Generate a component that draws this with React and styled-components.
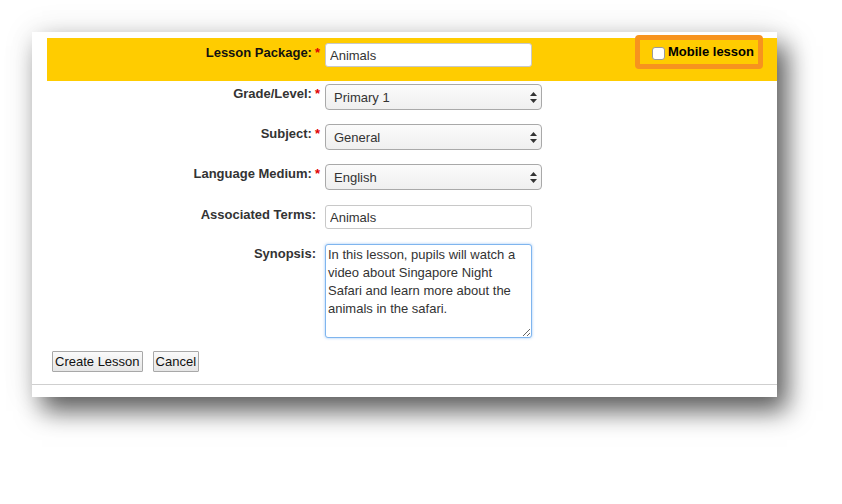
import React from "react";
import styled, { createGlobalStyle } from "styled-components";

const Global = createGlobalStyle`
  html, body { margin: 0; padding: 0; background: #ffffff; }
  body { font-family: "Liberation Sans", Arial, Helvetica, sans-serif; }
`;

const Page = styled.div`
  width: 842px;
  height: 504px;
  padding: 32px 0 0 32px;
  box-sizing: border-box;
  overflow: hidden;
`;

const Panel = styled.div`
  position: relative;
  width: 745px;
  height: 365px;
  box-sizing: border-box;
  background: #ffffff;
  padding: 6px 0 0 15px;
  display: flex;
  flex-direction: column;
  box-shadow: 10px 14px 24px rgba(0, 0, 0, 0.62), 0 0 30px rgba(0, 0, 0, 0.1);
`;

const Highlight = styled.div`
  display: grid;
  grid-template-columns: 269px 1fr;
  column-gap: 9px;
  align-items: start;
  background: #ffcc00;
  height: 43px;
  box-sizing: border-box;
  padding-top: 5px;
`;

const Fields = styled.div`
  display: grid;
  grid-template-columns: 269px 1fr;
  column-gap: 9px;
  row-gap: 14px;
  align-items: start;
  padding-top: 3px;
`;

const Label = styled.label`
  text-align: right;
  font-size: 13px;
  line-height: 16px;
  font-weight: bold;
  color: ${(p) => (p.$dark ? "#111" : "#333")};
  padding-top: 2px;
  margin-top: ${(p) => p.$mt || 0}px;
  white-space: nowrap;
`;

const Req = styled.span`
  color: #e00000;
  margin-left: 3px;
  margin-right: -4px;
`;

const TextInput = styled.input`
  display: block;
  width: 207px;
  height: 24px;
  box-sizing: border-box;
  margin-top: ${(p) => p.$mt || 0}px;
  border: 1px solid #c8c8c8;
  border-radius: 3px;
  background: #fff;
  padding: 0 4px;
  font-family: inherit;
  font-size: 13px;
  color: #333;
  outline: none;
`;

const SelectWrap = styled.div`
  position: relative;
  width: 217px;
  height: 26px;
`;

const Select = styled.select`
  appearance: none;
  -webkit-appearance: none;
  display: block;
  width: 217px;
  height: 26px;
  box-sizing: border-box;
  border: 1px solid #a9a9a9;
  border-radius: 4px;
  background: linear-gradient(#fbfbfb, #efefef);
  padding: 0 20px 0 8px;
  font-family: inherit;
  font-size: 13px;
  color: #333;
  outline: none;
`;

const Arrows = styled.svg`
  position: absolute;
  right: 5px;
  top: 8px;
  pointer-events: none;
`;

const Synopsis = styled.textarea`
  display: block;
  width: 207px;
  height: 94px;
  box-sizing: border-box;
  margin-top: 1px;
  border: 1px solid #7fb5ee;
  border-radius: 3px;
  box-shadow: 0 0 3px rgba(90, 160, 240, 0.6);
  padding: 1px 2px;
  font-family: inherit;
  font-size: 13px;
  line-height: 18px;
  color: #333;
  overflow: hidden;
  resize: both;
  outline: none;
`;

const Buttons = styled.div`
  display: flex;
  gap: 10px;
  padding: 13px 0 0 5px;
`;

const Button = styled.button`
  height: 21px;
  padding: 0 2px;
  border: 1px solid #a8a8a8;
  border-radius: 1px;
  background: linear-gradient(#fafafa, #e6e6e6);
  font-family: inherit;
  font-size: 13px;
  color: #111;
`;

const Rule = styled.hr`
  margin: 12px 0 0 -15px;
  border: 0;
  border-top: 1px solid #cfcfcf;
  height: 0;
`;

const MobileBox = styled.div`
  position: absolute;
  left: 603px;
  top: 3px;
  width: 128px;
  height: 34px;
  box-sizing: border-box;
  border: 5px solid #f7931e;
  border-radius: 4px;
  background: #ffcc00;
  display: flex;
  align-items: center;
  padding-left: 12px;
  gap: 3px;
`;

const Check = styled.span`
  width: 11px;
  height: 11px;
  margin-top: 3px;
  background: #fff;
  border: 1px solid #9a9a9a;
  border-radius: 3px;
`;

const MobileText = styled.span`
  font-size: 13px;
  font-weight: bold;
  color: #000;
  line-height: 16px;
  margin-top: -1px;
`;

const ArrowIcon = () => (
  <Arrows width="7" height="11" viewBox="0 0 7 11">
    <path d="M3.5 0 L7 4 L0 4 Z" fill="#333" />
    <path d="M3.5 11 L7 7 L0 7 Z" fill="#333" />
  </Arrows>
);

const DropDown = ({ value }) => (
  <SelectWrap>
    <Select defaultValue={value}>
      <option>{value}</option>
    </Select>
    <ArrowIcon />
  </SelectWrap>
);

const synopsis =
  "In this lesson, pupils will watch a\nvideo about Singapore Night\nSafari and learn more about the\nanimals in the safari.";

export default function App() {
  return (
    <Page>
      <Global />
      <Panel>
        <Highlight>
          <Label $dark>
            Lesson Package:<Req>*</Req>
          </Label>
          <TextInput defaultValue="Animals" />
        </Highlight>
        <Fields>
          <Label>
            Grade/Level:<Req>*</Req>
          </Label>
          <DropDown value="Primary 1" />
          <Label>
            Subject:<Req>*</Req>
          </Label>
          <DropDown value="General" />
          <Label>
            Language Medium:<Req>*</Req>
          </Label>
          <DropDown value="English" />
          <Label $mt={1}>Associated Terms:</Label>
          <TextInput $mt={1} defaultValue="Animals" />
          <Label $mt={1}>Synopsis:</Label>
          <Synopsis wrap="off" defaultValue={synopsis} />
        </Fields>
        <Buttons>
          <Button>Create Lesson</Button>
          <Button>Cancel</Button>
        </Buttons>
        <Rule />
        <MobileBox>
          <Check />
          <MobileText>Mobile lesson</MobileText>
        </MobileBox>
      </Panel>
    </Page>
  );
}
